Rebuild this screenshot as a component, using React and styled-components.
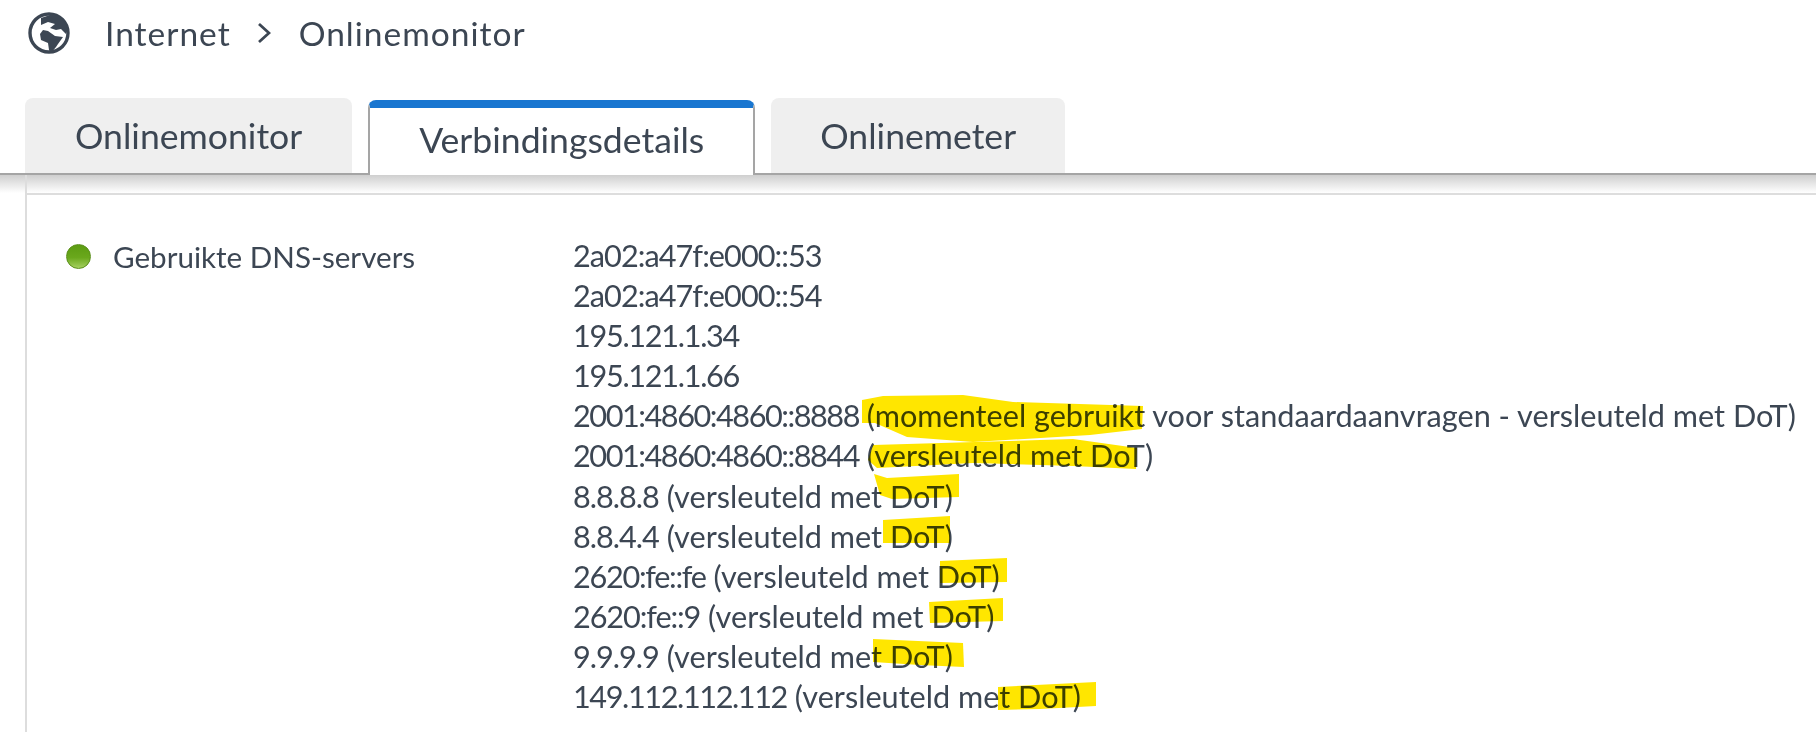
import React from 'react';
import styled, { createGlobalStyle } from 'styled-components';

// address, tracking of the address, note
const servers = [
  ['2a02:a47f:e000::53', -0.95],
  ['2a02:a47f:e000::54', -0.95],
  ['195.121.1.34', -1.3],
  ['195.121.1.66', -1.3],
  ['2001:4860:4860::8888', -1.45, '(momenteel gebruikt voor standaardaanvragen - versleuteld met DoT)'],
  ['2001:4860:4860::8844', -1.45, '(versleuteld met DoT)'],
  ['8.8.8.8', -1, '(versleuteld met DoT)'],
  ['8.8.4.4', -1, '(versleuteld met DoT)'],
  ['2620:fe::fe', -1.3, '(versleuteld met DoT)'],
  ['2620:fe::9', -1.1, '(versleuteld met DoT)'],
  ['9.9.9.9', -1, '(versleuteld met DoT)'],
  ['149.112.112.112', -1.4, '(versleuteld met DoT)'],
];

// marker strokes, page coordinates
const marks = [
  '862,400 883,396 963,395 1013,402 1143,406 1142,429 1090,435 973,442 907,437 875,423 862,423',
  '873,445 1073,439 1137,448 1136,469 1073,466 973,463 877,468 868,460',
  '874,474 887,478 959,474 959,497 892,499 880,495',
  '883,520 950,516 950,543 883,543',
  '940,561 1007,558 1007,582 940,583',
  '929,602 1003,598 1003,621 930,623',
  '873,639 963,643 964,667 920,665 873,662',
  '998,687 1096,682 1096,706 1040,709 998,710',
];

function Globe() {
  return (
    <GlobeIcon viewBox="0 0 42 42">
      <circle cx="21" cy="21" r="19" fill="#fff" stroke="#3c4653" strokeWidth="3.4" />
      <path
        fill="#3c4653"
        d="M13 6 L25 2 L33 5 L40 17 L38 22 L33 17 L28 18 L22 16 L27 12 L20 10 L13 13 Z"
      />
      <path
        fill="#3c4653"
        d="M12 22 L15 18 L20 19 L27 24 L35 25 L30 32 L28 35 L23 41 L21 38 L20 31 L13 28 Z"
      />
    </GlobeIcon>
  );
}

function App() {
  return (
    <Page>
      <GlobalStyle />
      <Breadcrumb>
        <Globe />
        <Crumb>Internet</Crumb>
        <Chevron viewBox="0 0 14 22">
          <path d="M2 2 L12 11 L2 20" fill="none" stroke="#3c4653" strokeWidth="2.8" />
        </Chevron>
        <Crumb>Onlinemonitor</Crumb>
      </Breadcrumb>
      <TabBar>
        <Tab>Onlinemonitor</Tab>
        <Tab $active>Verbindingsdetails</Tab>
        <Tab>Onlinemeter</Tab>
      </TabBar>
      <Body>
        <Panel>
          <Row>
            <Label>
              <StatusDot />
              Gebruikte DNS-servers
            </Label>
            <Values>
              {servers.map(([address, track, note]) => (
                <Value key={address}>
                  <Address $track={track}>{address}</Address>
                  {note && ` ${note}`}
                </Value>
              ))}
            </Values>
          </Row>
        </Panel>
      </Body>
      <Marks viewBox="0 0 1816 732">
        {marks.map((m) => (
          <polygon key={m} points={m} fill="#ffe600" />
        ))}
      </Marks>
    </Page>
  );
}

export default App;

const GlobalStyle = createGlobalStyle`
  html, body {
    margin: 0;
    background: #fff;
  }
`;

const Page = styled.div`
  position: relative;
  width: 1816px;
  height: 732px;
  overflow: hidden;
  font-family: Lato, "Noto Sans", sans-serif;
  color: #3c4653;
`;

const Breadcrumb = styled.div`
  display: flex;
  align-items: center;
  height: 66px;
  padding-left: 28px;
`;

const GlobeIcon = styled.svg`
  width: 42px;
  height: 42px;
  margin-right: 35px;
`;

const Crumb = styled.span`
  font-size: 33.5px;
  letter-spacing: 1px;
`;

const Chevron = styled.svg`
  width: 14px;
  height: 22px;
  margin: 0 28px 0 26px;
`;

const TabBar = styled.div`
  display: flex;
  align-items: flex-end;
  gap: 16px;
  height: 109px;
  padding: 0 0 0 25px;
  box-sizing: border-box;
  border-bottom: 2px solid #a5a5a5;
`;

const Tab = styled.div`
  display: flex;
  align-items: center;
  justify-content: center;
  box-sizing: border-box;
  font-size: 35.6px;
  padding: 0 49px;
  border-radius: 8px 8px 0 0;
  height: 75px;
  background: ${(p) => (p.$active ? '#fff' : '#efefef')};
  &:first-child {
    padding: 0 50px;
  }
  ${(p) =>
    p.$active &&
    `
    border: 2px solid #a5a5a5;
    border-top: 8px solid #1976d0;
    border-bottom: 0;
    margin-bottom: -2px;
    padding-bottom: 5px;
  `}
`;

const Body = styled.div`
  padding-left: 25px;
  background: linear-gradient(#cfcfcf, #ffffff) no-repeat 0 0 / 100% 18px;
`;

const Panel = styled.div`
  border-left: 2px solid #ddd;
  height: 560px;
  padding-top: 18px;
`;

const Row = styled.div`
  display: flex;
  border-top: 2px solid #ddd;
  padding: 41px 0 0 39px;
`;

const Label = styled.div`
  display: flex;
  align-items: center;
  gap: 22px;
  width: 507px;
  height: 40px;
  font-size: 29.6px;
`;

const StatusDot = styled.span`
  width: 25px;
  height: 25px;
  flex: none;
  border-radius: 50%;
  border: 1px solid #5a8f1a;
  box-sizing: border-box;
  background: linear-gradient(#5c9c12, #6aa81c 55%, #a5d060);
`;

const Values = styled.div`
  display: flex;
  flex-direction: column;
`;

const Value = styled.div`
  height: 40.1px;
  line-height: 40px;
  font-size: 30.65px;
  white-space: nowrap;
`;

const Address = styled.span`
  letter-spacing: ${(p) => p.$track}px;
`;

const Marks = styled.svg`
  position: absolute;
  left: 0;
  top: 0;
  width: 1816px;
  height: 732px;
  mix-blend-mode: multiply;
  pointer-events: none;
`;
